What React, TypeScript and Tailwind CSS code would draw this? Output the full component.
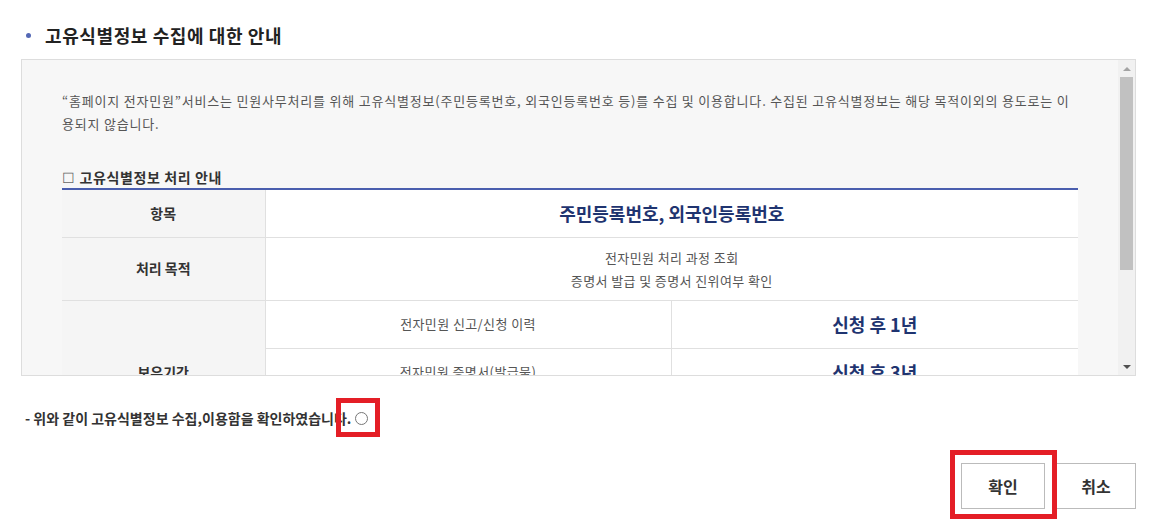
import React from "react";

const KR = "font-['Noto_Sans_CJK_KR','Noto_Sans',sans-serif]";

function FakeScrollbar() {
  return (
    <div className="flex w-[17px] shrink-0 flex-col bg-[#f1f1f1]">
      <div className="flex h-[17px] items-center justify-center">
        <span className="h-0 w-0 border-x-[4px] border-b-[4px] border-x-transparent border-b-[#a3a3a3]" />
      </div>
      <div className="mx-[2px] h-[193px] bg-[#c1c1c1]" />
      <div className="flex-1" />
      <div className="flex h-[17px] items-center justify-center">
        <span className="h-0 w-0 border-x-[4px] border-t-[4px] border-x-transparent border-t-[#505050]" />
      </div>
    </div>
  );
}

export default function App() {
  const th = "border-b border-r border-[#e0e0e0] bg-[#f5f5f5] text-center text-[14px] font-bold text-[#333]";
  const td = "border-b border-[#e0e0e0] bg-white text-center text-[13px] tracking-[0.4px] text-[#555]";
  const strong = "border-b border-[#e0e0e0] bg-white text-center text-[18px] font-bold text-[#1f3470]";

  return (
    <div className={`h-[526px] w-[1155px] bg-white pl-[21px] pr-[19px] pt-[22px] ${KR}`}>
      {/* title */}
      <div className="flex h-[26px] items-center">
        <span className="ml-[5px] h-[5px] w-[5px] rounded-full bg-[#5468b5]" />
        <h2 className="ml-[14px] text-[18px] font-bold tracking-[0.6px] text-[#222]">
          고유식별정보 수집에 대한 안내
        </h2>
      </div>

      {/* scroll box */}
      <div className="mt-[11px] flex h-[317px] border border-[#dddddd] bg-[#f7f7f7]">
        <div className="flex-1 overflow-hidden px-[40px] pt-[29px]">
          <p className="text-[13px] leading-[23px] tracking-[0.8px] text-[#555]">
            “홈페이지 전자민원”서비스는 민원사무처리를 위해 고유식별정보(주민등록번호, 외국인등록번호 등)를 수집 및 이용합니다. 수집된 고유식별정보는 해당 목적이외의 용도로는 이용되지 않습니다.
          </p>

          <h3 className="mt-[32px] flex h-[20px] items-center text-[14px] font-bold tracking-[0.6px] text-[#333]">
            <span className="mr-[4px] font-normal text-[#666]">☐</span>고유식별정보 처리 안내
          </h3>

          <table className="mt-[1px] w-full table-fixed border-collapse border-t-2 border-[#4a5eae]">
            <colgroup>
              <col className="w-[203px]" />
              <col className="w-[406px]" />
              <col />
            </colgroup>
            <tbody>
              <tr className="h-[48px]">
                <th className={th}>항목</th>
                <td colSpan={2} className={strong}>주민등록번호, 외국인등록번호</td>
              </tr>
              <tr className="h-[63px]">
                <th className={th}>처리 목적</th>
                <td colSpan={2} className={`${td} leading-[23px]`}>
                  전자민원 처리 과정 조회
                  <br />
                  증명서 발급 및 증명서 진위여부 확인
                </td>
              </tr>
              <tr className="h-[48px]">
                <th rowSpan={3} className={th}>보유기간</th>
                <td className={`${td} border-r`}>전자민원 신고/신청 이력</td>
                <td className={strong}>신청 후 1년</td>
              </tr>
              <tr className="h-[48px]">
                <td className={`${td} border-r`}>전자민원 증명서(발급물)</td>
                <td className={strong}>신청 후 3년</td>
              </tr>
              <tr className="h-[48px]">
                <td className={`${td} border-r`}>전자민원 처리 결과</td>
                <td className={strong}>신청 후 5년</td>
              </tr>
            </tbody>
          </table>
        </div>
        <FakeScrollbar />
      </div>

      {/* agreement */}
      <div className="mt-[32px] flex h-[20px] items-center pl-[4px] text-[14px] font-bold text-[#333]">
        <span>- 위와 같이 고유식별정보 수집,이용함을 확인하였습니다.</span>
        <span className="relative ml-[4px] h-[13px] w-[13px] rounded-full border border-[#777] bg-white">
          <span className="absolute left-[-20px] top-[-15px] h-[39px] w-[44px] border-[5px] border-[#e41e26]" />
        </span>
      </div>

      {/* buttons */}
      <div className="mt-[35px] flex justify-end gap-[11px]">
        <button className="relative h-[46px] w-[84px] border border-[#bbb] bg-white text-[16px] font-bold text-[#333]">
          확인
          <span className="absolute left-[-12px] top-[-14px] h-[69px] w-[107px] border-[5px] border-[#e41e26]" />
        </button>
        <button className="h-[46px] w-[80px] border border-[#bbb] bg-white text-[16px] font-bold text-[#333]">
          취소
        </button>
      </div>
    </div>
  );
}
